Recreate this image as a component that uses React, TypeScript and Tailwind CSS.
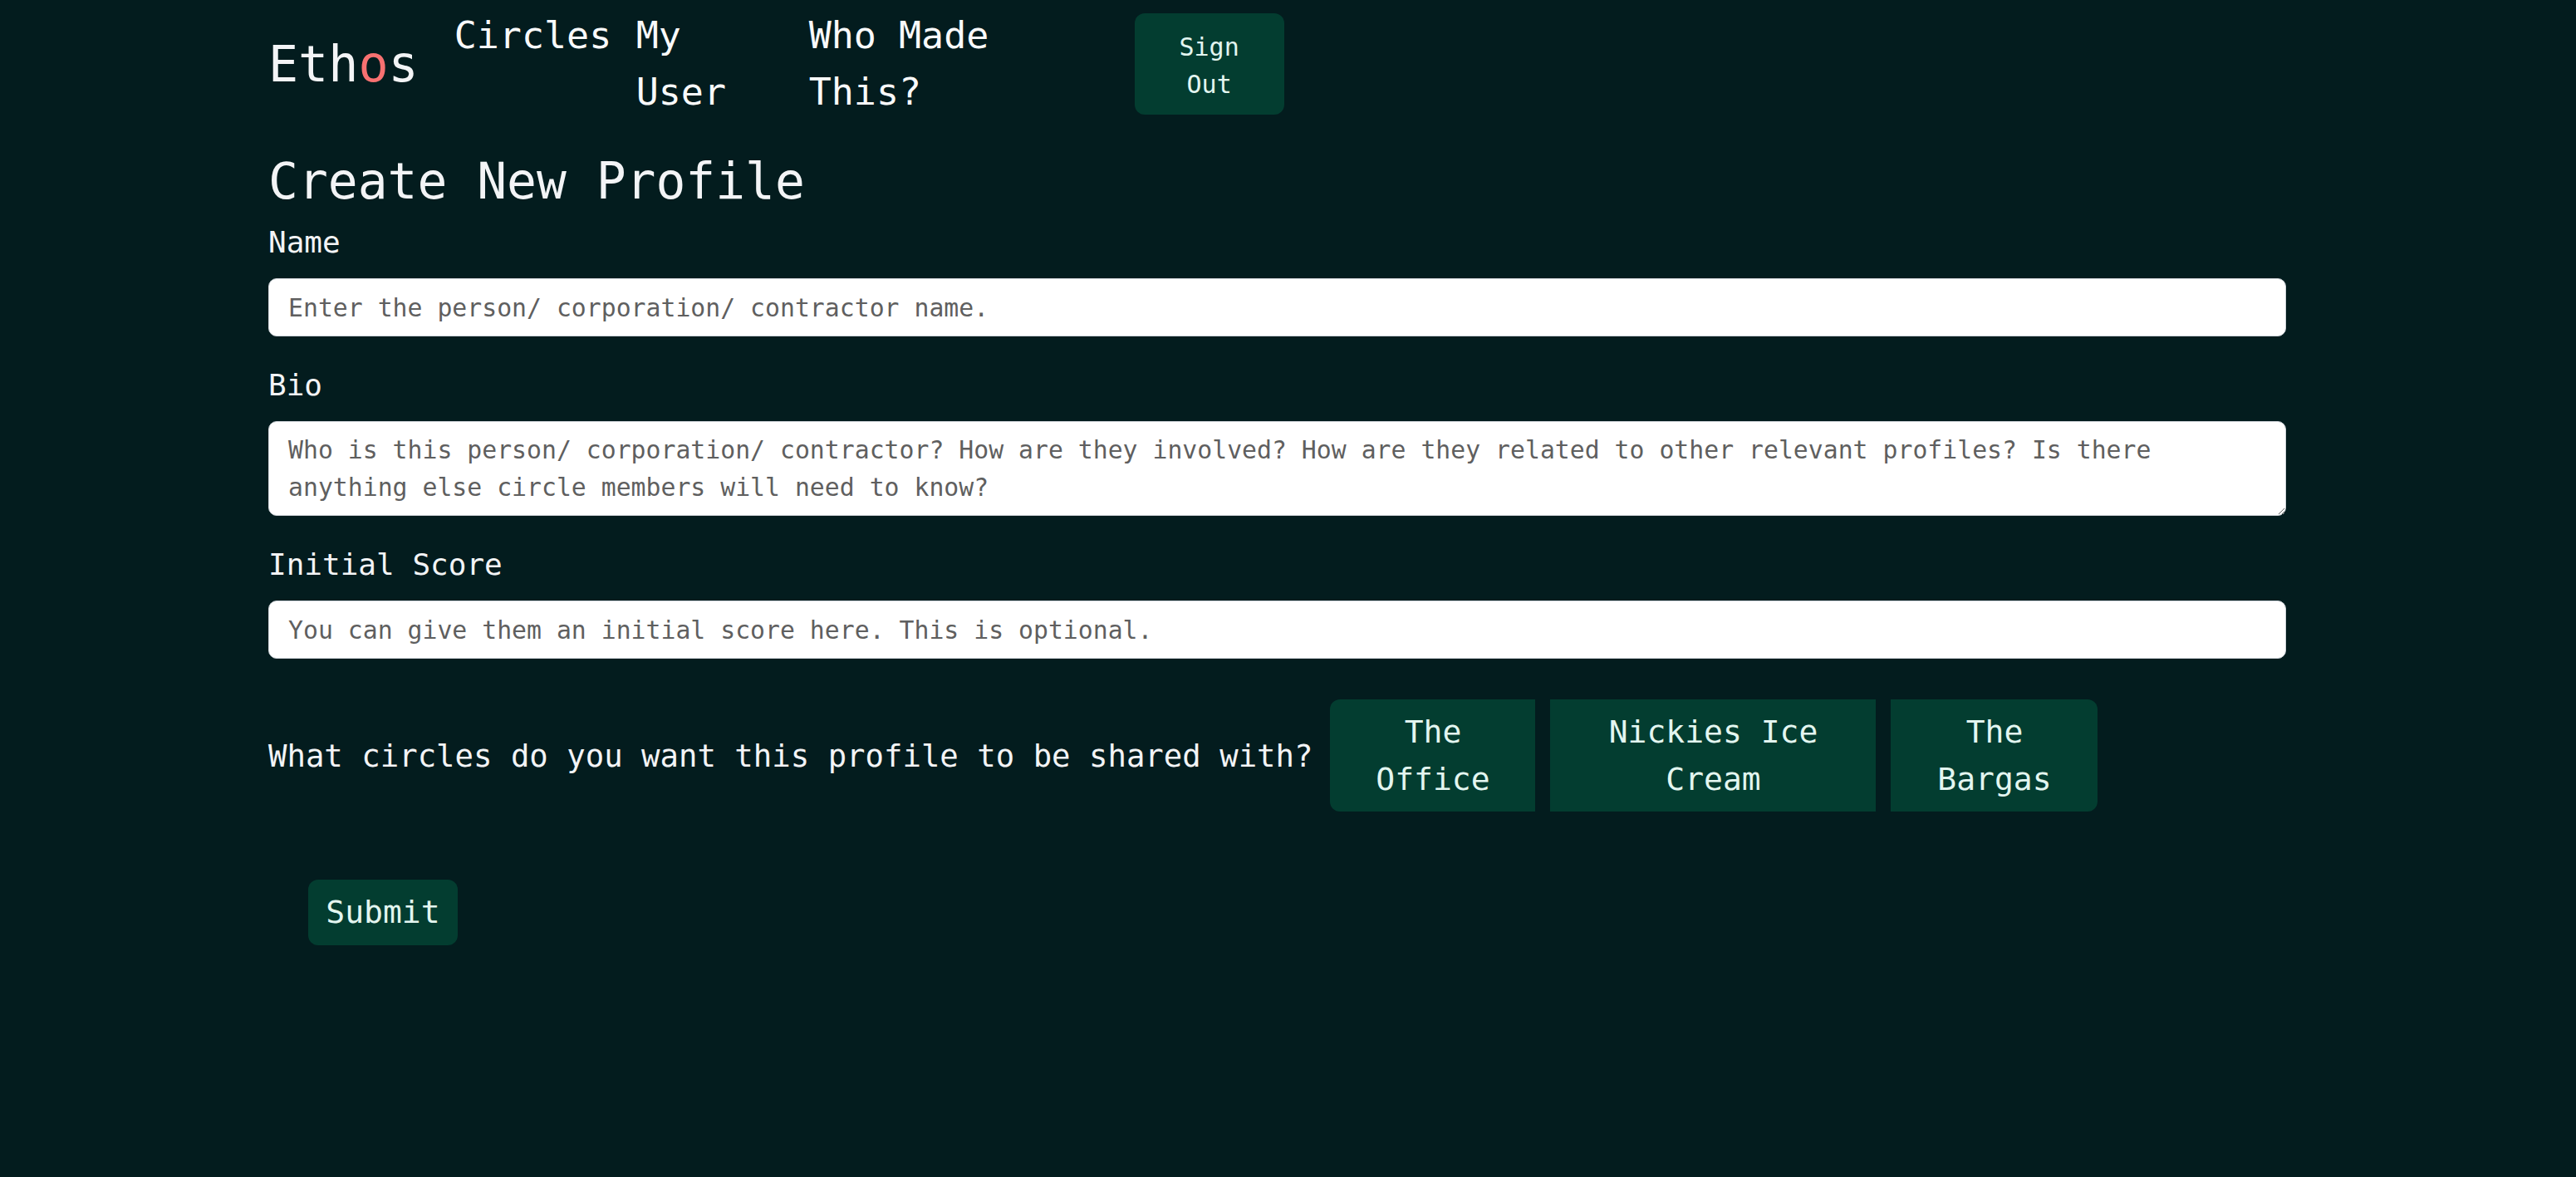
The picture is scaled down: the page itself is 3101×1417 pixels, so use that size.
import React from 'react';

const mono = "font-['DejaVu_Sans_Mono',monospace]";

function Nav() {
    return (
        <nav className="flex items-start pl-[323px]">
            <div className="mt-[41px] text-[60px] leading-[72px] text-[#f3f4f6]">
                Eth<span className="text-[#f87171]">o</span>s
            </div>
            <a className="ml-[43px] mt-[9px] w-[190px] text-[45px] leading-[68px] text-[#f9fafb]">Circles</a>
            <a className="ml-[29px] mt-[9px] w-[150px] text-[45px] leading-[68px] text-[#f9fafb]">My User</a>
            <a className="ml-[58px] mt-[9px] w-[300px] text-[45px] leading-[68px] text-[#f9fafb]">Who Made This?</a>
            <button className="ml-[92px] mt-[16px] w-[180px] rounded-[12px] bg-[#033d30] px-[32px] pb-[14px] pt-[18px] text-[30px] leading-[45px] text-[#e3f6f0]">
                Sign Out
            </button>
        </nav>
    );
}

const circles = [
    { name: 'The Office', w: 'w-[247px]', r: 'rounded-l-[12px]' },
    { name: 'Nickies Ice Cream', w: 'w-[392px]', r: '' },
    { name: 'The Bargas', w: 'w-[249px]', r: 'rounded-r-[12px]' },
];

export default function App() {
    return (
        <div className={`min-h-screen w-full bg-[#031c1e] ${mono}`}>
            <Nav />

            <div className="ml-[323px] w-[2429px]">
                <h1 className="mt-[38px] text-[59.6px] leading-[72px] text-[#f3f4f6]">Create New Profile</h1>

                <label className="mt-[10px] block text-[36px] leading-[54px] text-[#f3f4f6]">Name</label>
                <input
                    className="mt-[16px] block h-[70px] w-full rounded-[10px] border border-[#d1d5db] bg-white px-[23px] text-[29.8px] leading-[45px] text-[#333] placeholder:text-[#5f5f5f] outline-none"
                    placeholder="Enter the person/ corporation/ contractor name."
                />

                <label className="mt-[32px] block text-[36px] leading-[54px] text-[#f3f4f6]">Bio</label>
                <textarea
                    className="mt-[16px] block h-[114px] w-full rounded-[10px] border border-[#d1d5db] bg-white px-[23px] py-[11px] text-[29.8px] leading-[45px] text-[#333] placeholder:text-[#5f5f5f] outline-none"
                    placeholder="Who is this person/ corporation/ contractor? How are they involved? How are they related to other relevant profiles? Is there anything else circle members will need to know?"
                />

                <label className="mt-[32px] block text-[36px] leading-[54px] text-[#f3f4f6]">Initial Score</label>
                <input
                    className="mt-[16px] block h-[70px] w-full rounded-[10px] border border-[#d1d5db] bg-white px-[23px] text-[29.8px] leading-[45px] text-[#333] placeholder:text-[#5f5f5f] outline-none"
                    placeholder="You can give them an initial score here. This is optional."
                />

                <div className="mt-[49px] flex items-center">
                    <span className="text-[37.3px] leading-[56px] text-[#f3f4f6]">
                        What circles do you want this profile to be shared with?
                    </span>
                    <div className="ml-[21px] flex gap-[18px]">
                        {circles.map((c) => (
                            <button
                                key={c.name}
                                className={`${c.w} ${c.r} h-[135px] bg-[#033d30] px-[16px] text-center text-[38px] leading-[57px] text-[#e3f6f0]`}
                            >
                                {c.name}
                            </button>
                        ))}
                    </div>
                </div>

                <button className="ml-[48px] mt-[82px] h-[79px] w-[180px] rounded-[12px] bg-[#033d30] text-[38px] leading-[57px] text-[#e3f6f0]">
                    Submit
                </button>
            </div>
        </div>
    );
}
